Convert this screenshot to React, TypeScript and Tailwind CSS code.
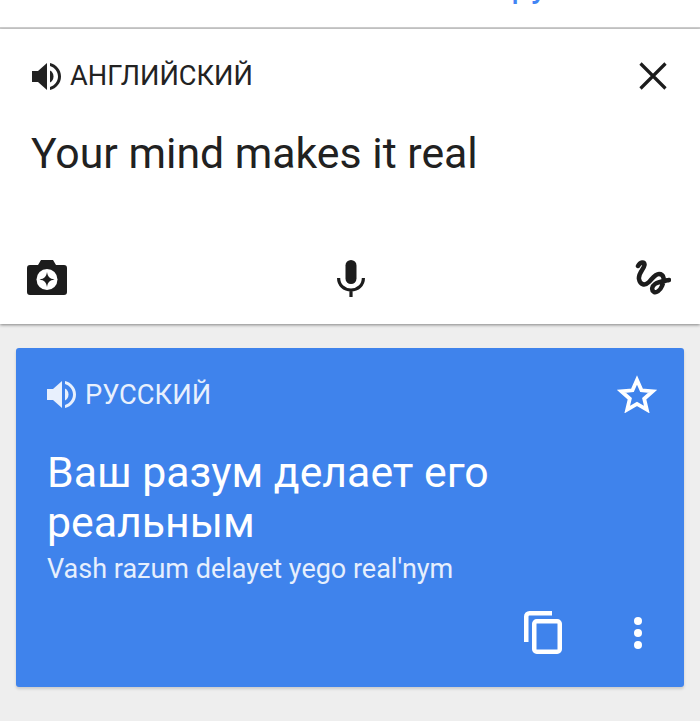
function Speaker({ className }: { className: string }) {
  return (
    <svg viewBox="0 0 30 27" className={className} fill="currentColor">
      <path d="M0 8h6l9-8v27l-9-8H0z" />
      <path d="M18 7.500c2.300 1.200 3.500 3.300 3.500 6s-1.200 4.800-3.500 6z" />
      <path d="M18 0c6.500 1.600 11 7 11 13.500S24.500 25.400 18 27v-3c4.700-1.500 8-5.500 8-10.500S22.700 4.500 18 3z" />
    </svg>
  );
}

function CloseIcon() {
  return (
    <svg viewBox="0 0 28 28" className="w-[28px] h-[28px] text-[#1c1c1c]" fill="none" stroke="currentColor" strokeWidth="3.200">
      <path d="M1.500 1.500l25 25M26.500 1.500l-25 25" />
    </svg>
  );
}

function CameraIcon() {
  return (
    <svg viewBox="0 0 40 35" className="w-[40px] h-[35px] text-[#1c1c1c]" fill="currentColor">
      <path d="M3 5h8l3-5h12l3 5h8a3 3 0 0 1 3 3v24a3 3 0 0 1-3 3H3a3 3 0 0 1-3-3V8a3 3 0 0 1 3-3z" />
      <circle cx="20" cy="19.500" r="10.500" fill="#fff" />
      <path d="M20 12c.9 5 2.500 6.600 7.500 7.500-5 .9-6.600 2.500-7.500 7.500-.9-5-2.500-6.600-7.500-7.500 5-.9 6.600-2.500 7.500-7.500z" />
    </svg>
  );
}

function MicIcon() {
  return (
    <svg viewBox="0 0 28 37" className="w-[28px] h-[37px] text-[#1c1c1c]" fill="none" stroke="currentColor" strokeWidth="3.200">
      <rect x="8.500" y="0" width="11" height="24" rx="5.500" fill="currentColor" stroke="none" />
      <path d="M1.600 18c0 7 5.400 12 12.400 12s12.400-5 12.400-12M14 30v7" />
    </svg>
  );
}

function HandwriteIcon() {
  return (
    <svg viewBox="0 0 36 35" className="w-[36px] h-[35px] text-[#1c1c1c]" fill="none" stroke="currentColor" strokeWidth="4.500" strokeLinecap="round">
      <path d="M3 6C5 2 10 1 9.500 5 9 9 3 13 4 19c1 6 6 7 10 3 3-3 6-8 10-8 5 0 6 6 3 12-2 5-6 7-8 6-3-2-2-6 1-8 3-2 9-3 14-4" />
    </svg>
  );
}

function CopyIcon() {
  return (
    <svg viewBox="0 0 38 43" className="w-[38px] h-[43px] text-white" fill="none" stroke="currentColor" strokeWidth="4.500">
      <path d="M2.250 31V5.500a3.250 3.250 0 0 1 3.250-3.250H28" />
      <rect x="10.250" y="10.250" width="25.500" height="30.500" rx="2.500" />
    </svg>
  );
}

function StarIcon() {
  return (
    <svg viewBox="0 0 40 38" className="w-[40px] h-[38px] text-white shrink-0" fill="none" stroke="currentColor" strokeWidth="3.800" strokeLinejoin="miter">
      <path d="M20 5l4.500 10.300 11.200 1-8.500 7.400 2.600 10.900L20 28.900l-9.800 5.700 2.600-10.900-8.500-7.400 11.200-1z" />
    </svg>
  );
}

function DotsIcon() {
  return (
    <svg viewBox="0 0 8 32" className="w-[8px] h-[32px] text-white" fill="currentColor">
      <circle cx="4" cy="4" r="4" />
      <circle cx="4" cy="16" r="4" />
      <circle cx="4" cy="28" r="4" />
    </svg>
  );
}

export default function App() {
  return (
    <div className="w-[700px] h-[721px] overflow-hidden bg-[#eeeeee] font-['Roboto',sans-serif]">
      {/* Bout du texte coupé en haut */}
      <div className="h-[27px] bg-white overflow-hidden pl-[511px]">
        <p className="-mt-[34px] text-[36px] leading-[36px] text-[#4285f4] whitespace-nowrap">ру</p>
      </div>
      <div className="h-[2px] bg-[#cfcfcf]" />

      {/* Saisie */}
      <div className="h-[295px] bg-white shadow-[0_1px_3px_rgba(0,0,0,0.45)] relative flex flex-col px-[27px]">
        <div className="flex items-center justify-between h-[30px] mt-[32px] pl-[5px] pr-[6px]">
          <div className="flex items-center gap-[8px] text-[#222222]">
            <Speaker className="w-[30px] h-[27px]" />
            <span className="text-[27.200px] leading-[30px]">АНГЛИЙСКИЙ</span>
          </div>
          <CloseIcon />
        </div>
        <p className="mt-[36px] pl-[4px] text-[42.800px] leading-[52px] text-[#212121]">Your mind makes it real</p>
        <div className="mt-auto mb-[27px] flex items-start justify-between pr-[2px]">
          <CameraIcon />
          <MicIcon />
          <HandwriteIcon />
        </div>
      </div>

      {/* Traduction */}
      <div className="mx-[16px] mt-[24px] h-[339px] rounded-[3px] bg-[#3f83ec] shadow-[0_2px_3px_rgba(0,0,0,0.15)] text-white flex flex-col pl-[31px] pr-[27px]">
        <div className="flex items-center justify-between h-[36px] mt-[28px]">
          <div className="flex items-center gap-[8px] text-[#e8f0fd]">
            <Speaker className="w-[30px] h-[27px]" />
            <span className="text-[27.300px] leading-[36px] pt-[2px]">РУССКИЙ</span>
          </div>
          <StarIcon />
        </div>
        <p className="mt-[35px] text-[42.800px] leading-[50px]">Ваш разум делает его<br />реальным</p>
        <p className="mt-[5px] text-[27px] leading-[34px] text-[#e6effd] whitespace-nowrap">Vash razum delayet yego real'nym</p>
        <div className="mt-auto mb-[33px] pr-[15px] flex items-center justify-end gap-[72px]">
          <CopyIcon />
          <DotsIcon />
        </div>
      </div>
    </div>
  );
}
